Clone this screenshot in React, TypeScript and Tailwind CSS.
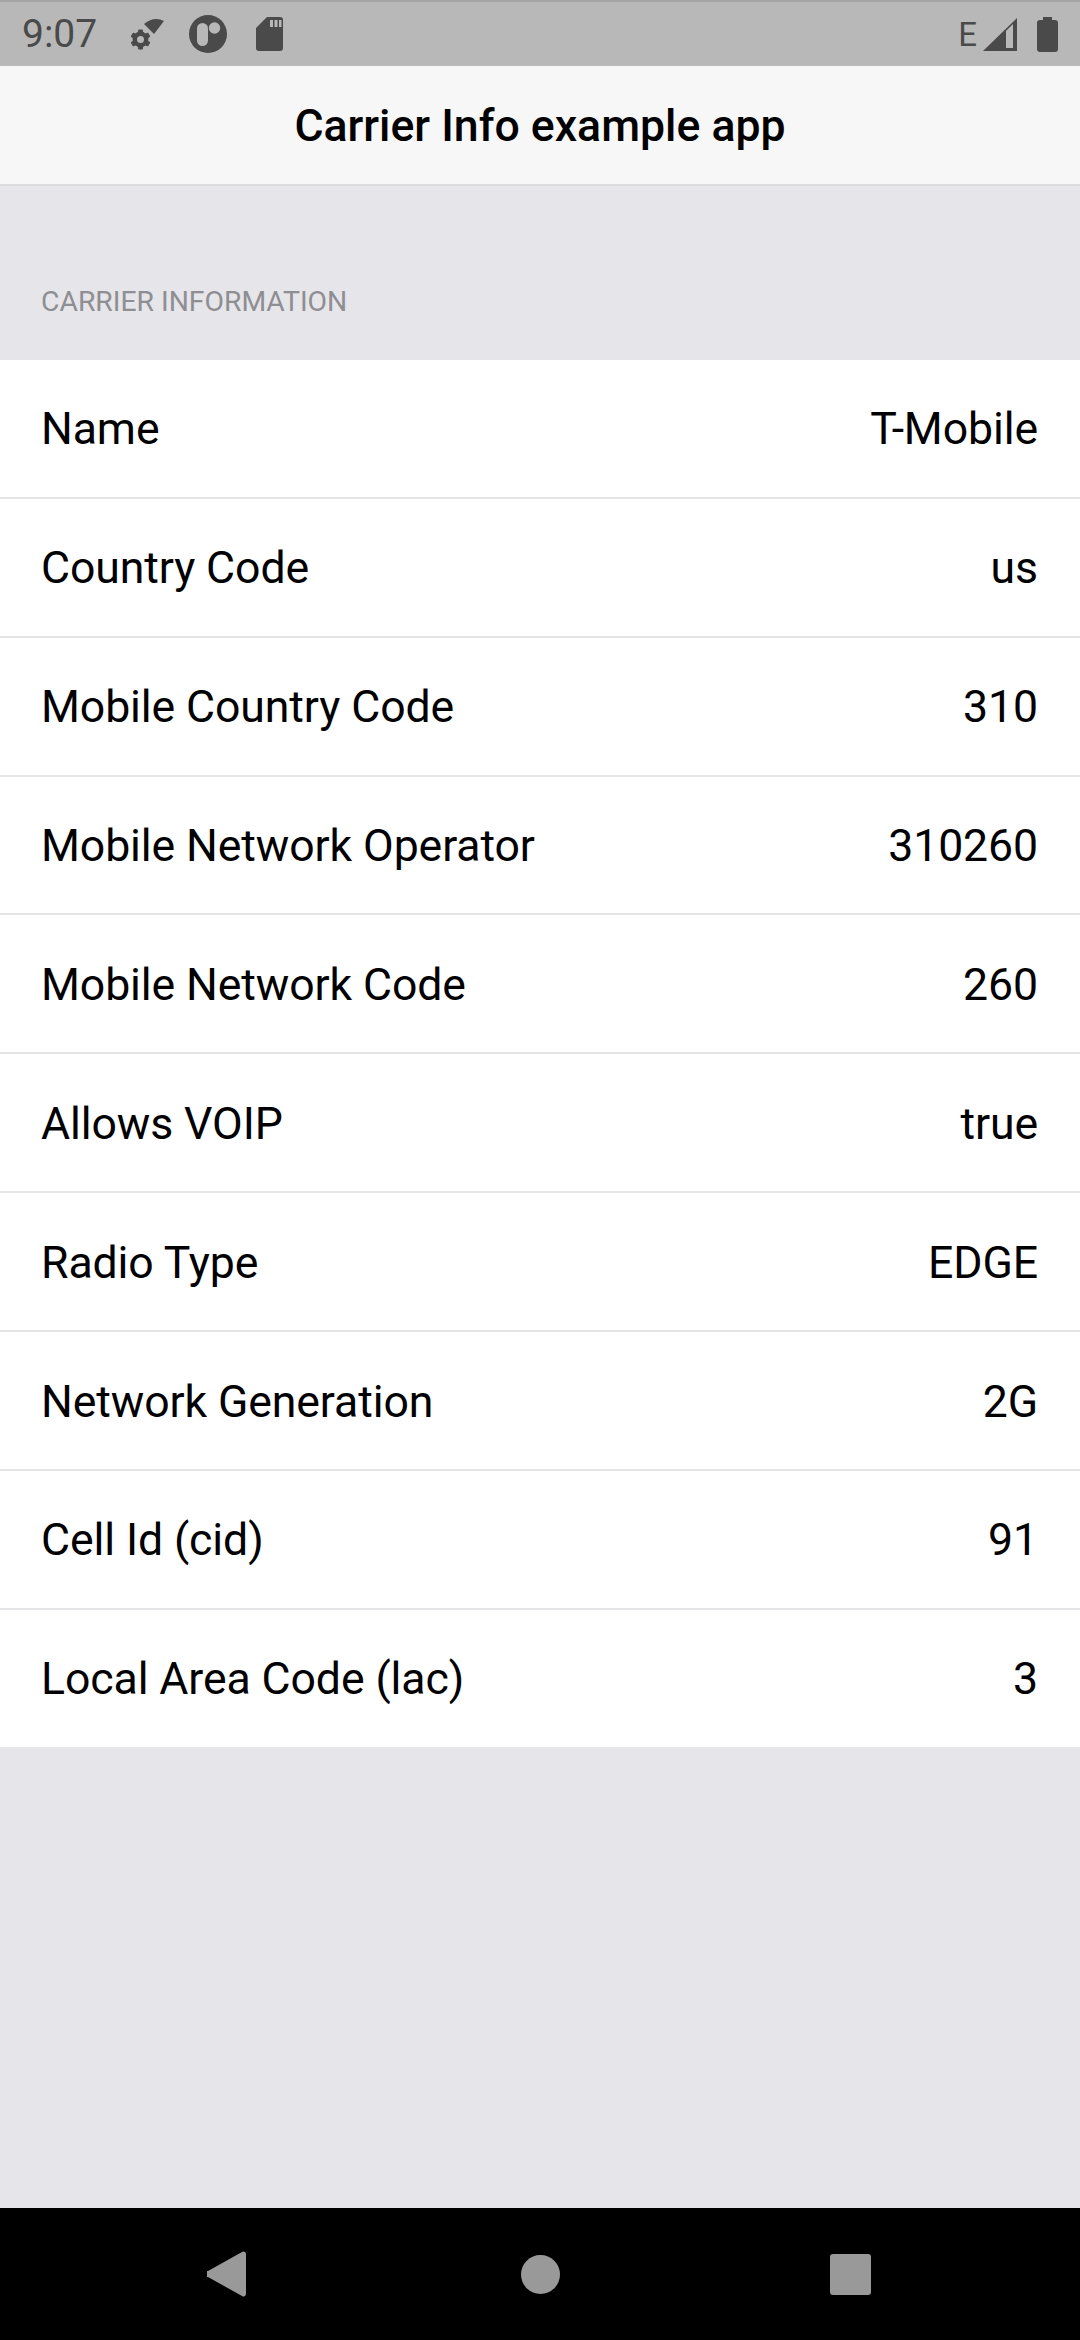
const rows = [
  ["Name", "T-Mobile"],
  ["Country Code", "us"],
  ["Mobile Country Code", "310"],
  ["Mobile Network Operator", "310260"],
  ["Mobile Network Code", "260"],
  ["Allows VOIP", "true"],
  ["Radio Type", "EDGE"],
  ["Network Generation", "2G"],
  ["Cell Id (cid)", "91"],
  ["Local Area Code (lac)", "3"],
];

const StatusBar = () => (
  <div className="h-[66px] bg-[#b8b8b8] border-t-2 border-[#a3a3a3] flex items-center pl-[22px] pr-[22px] text-[#4a4a4a]">
    <span className="w-[108px] text-[39px] leading-none">9:07</span>
    <svg width="34" height="33" viewBox="0 0 34 33" fill="#4a4a4a" className="mr-[25px]">
      <path d="M14 6 Q24 -2 34 3 L24 16 Z" />
      <circle cx="10.500" cy="21.500" r="5.700" fill="none" stroke="#4a4a4a" strokeWidth="4.400" />
      <g>
        <rect x="8" y="11.500" width="5" height="20" rx="1" />
        <rect x="8" y="11.500" width="5" height="20" rx="1" transform="rotate(60 10.500 21.500)" />
        <rect x="8" y="11.500" width="5" height="20" rx="1" transform="rotate(120 10.500 21.500)" />
      </g>
      <circle cx="10.500" cy="21.500" r="3.500" fill="#b8b8b8" />
    </svg>
    <svg width="38" height="38" viewBox="0 0 38 38" className="mr-[29px]">
      <circle cx="19" cy="19" r="19" fill="#4a4a4a" />
      <rect x="8" y="8" width="11" height="23" rx="5.500" fill="#b8b8b8" />
      <circle cx="25.500" cy="13" r="5.700" fill="#b8b8b8" />
    </svg>
    <svg width="27" height="34" viewBox="0 0 27 34">
      <path d="M11 0h13a3 3 0 0 1 3 3v28a3 3 0 0 1-3 3H3a3 3 0 0 1-3-3V11z" fill="#4a4a4a" />
      <path d="M14 3h3v7h-3zM18.500 3h3v7h-3zM23 3h2.500v7H23z" fill="#b8b8b8" />
    </svg>
    <div className="ml-auto flex items-center">
      <span className="text-[33px] leading-none mr-[6px]">E</span>
      <svg width="34" height="33" viewBox="0 0 34 33" className="mr-[20px]">
        <path d="M0 33 34 0v33z" fill="#4a4a4a" />
        <path d="M23 13l7-7v24h-7z" fill="#b8b8b8" />
      </svg>
      <svg width="21" height="35" viewBox="0 0 21 35">
        <path d="M6 0h9v3h3a3 3 0 0 1 3 3v26a3 3 0 0 1-3 3H3a3 3 0 0 1-3-3V6a3 3 0 0 1 3-3h3z" fill="#4a4a4a" />
      </svg>
    </div>
  </div>
);

const NavBar = () => (
  <div className="h-[132px] bg-black flex items-center pl-[207px]">
    <svg width="39" height="46" viewBox="0 0 39 46" fill="#999999" className="mr-[275px]">
      <path d="M35 1 1 20a3 3 0 0 0 0 6l34 19a2.500 2.500 0 0 0 4-2V3a2.500 2.500 0 0 0-4-2z" />
    </svg>
    <div className="w-[39px] h-[39px] rounded-full bg-[#999999] mr-[270px]" />
    <div className="w-[41px] h-[41px] rounded-[3px] bg-[#999999]" />
  </div>
);

const App = () => {
  return (
    <div className="w-[1080px] h-[2340px] flex flex-col bg-[#e5e5ea] font-['Roboto',sans-serif]">
      <StatusBar />

      <header className="h-[120px] bg-[#f7f7f7] border-b-2 border-[#dcdcdf] flex items-center justify-center pt-[2px]">
        <h1 className="text-[44.6px] font-medium text-black">Carrier Info example app</h1>
      </header>

      <div className="flex-1">
        <div className="h-[174px] flex items-end px-[41px] pb-[44px]">
          <span className="text-[28.3px] leading-none text-[#8e8e93]">CARRIER INFORMATION</span>
        </div>

        <div className="bg-white">
          {rows.map(([label, value], i) => (
            <div
              key={label}
              className={`flex items-center justify-between pl-[41px] pr-[42px] text-[44.6px] tracking-[-0.1px] text-black ${
                i < rows.length - 1 ? "h-[138.86px] pt-[3px] border-b-2 border-[#e4e4e7]" : "h-[137.5px] pt-[1px]"
              }`}
            >
              <span>{label}</span>
              <span>{value}</span>
            </div>
          ))}
        </div>
      </div>

      <NavBar />
    </div>
  );
};

export default App;
